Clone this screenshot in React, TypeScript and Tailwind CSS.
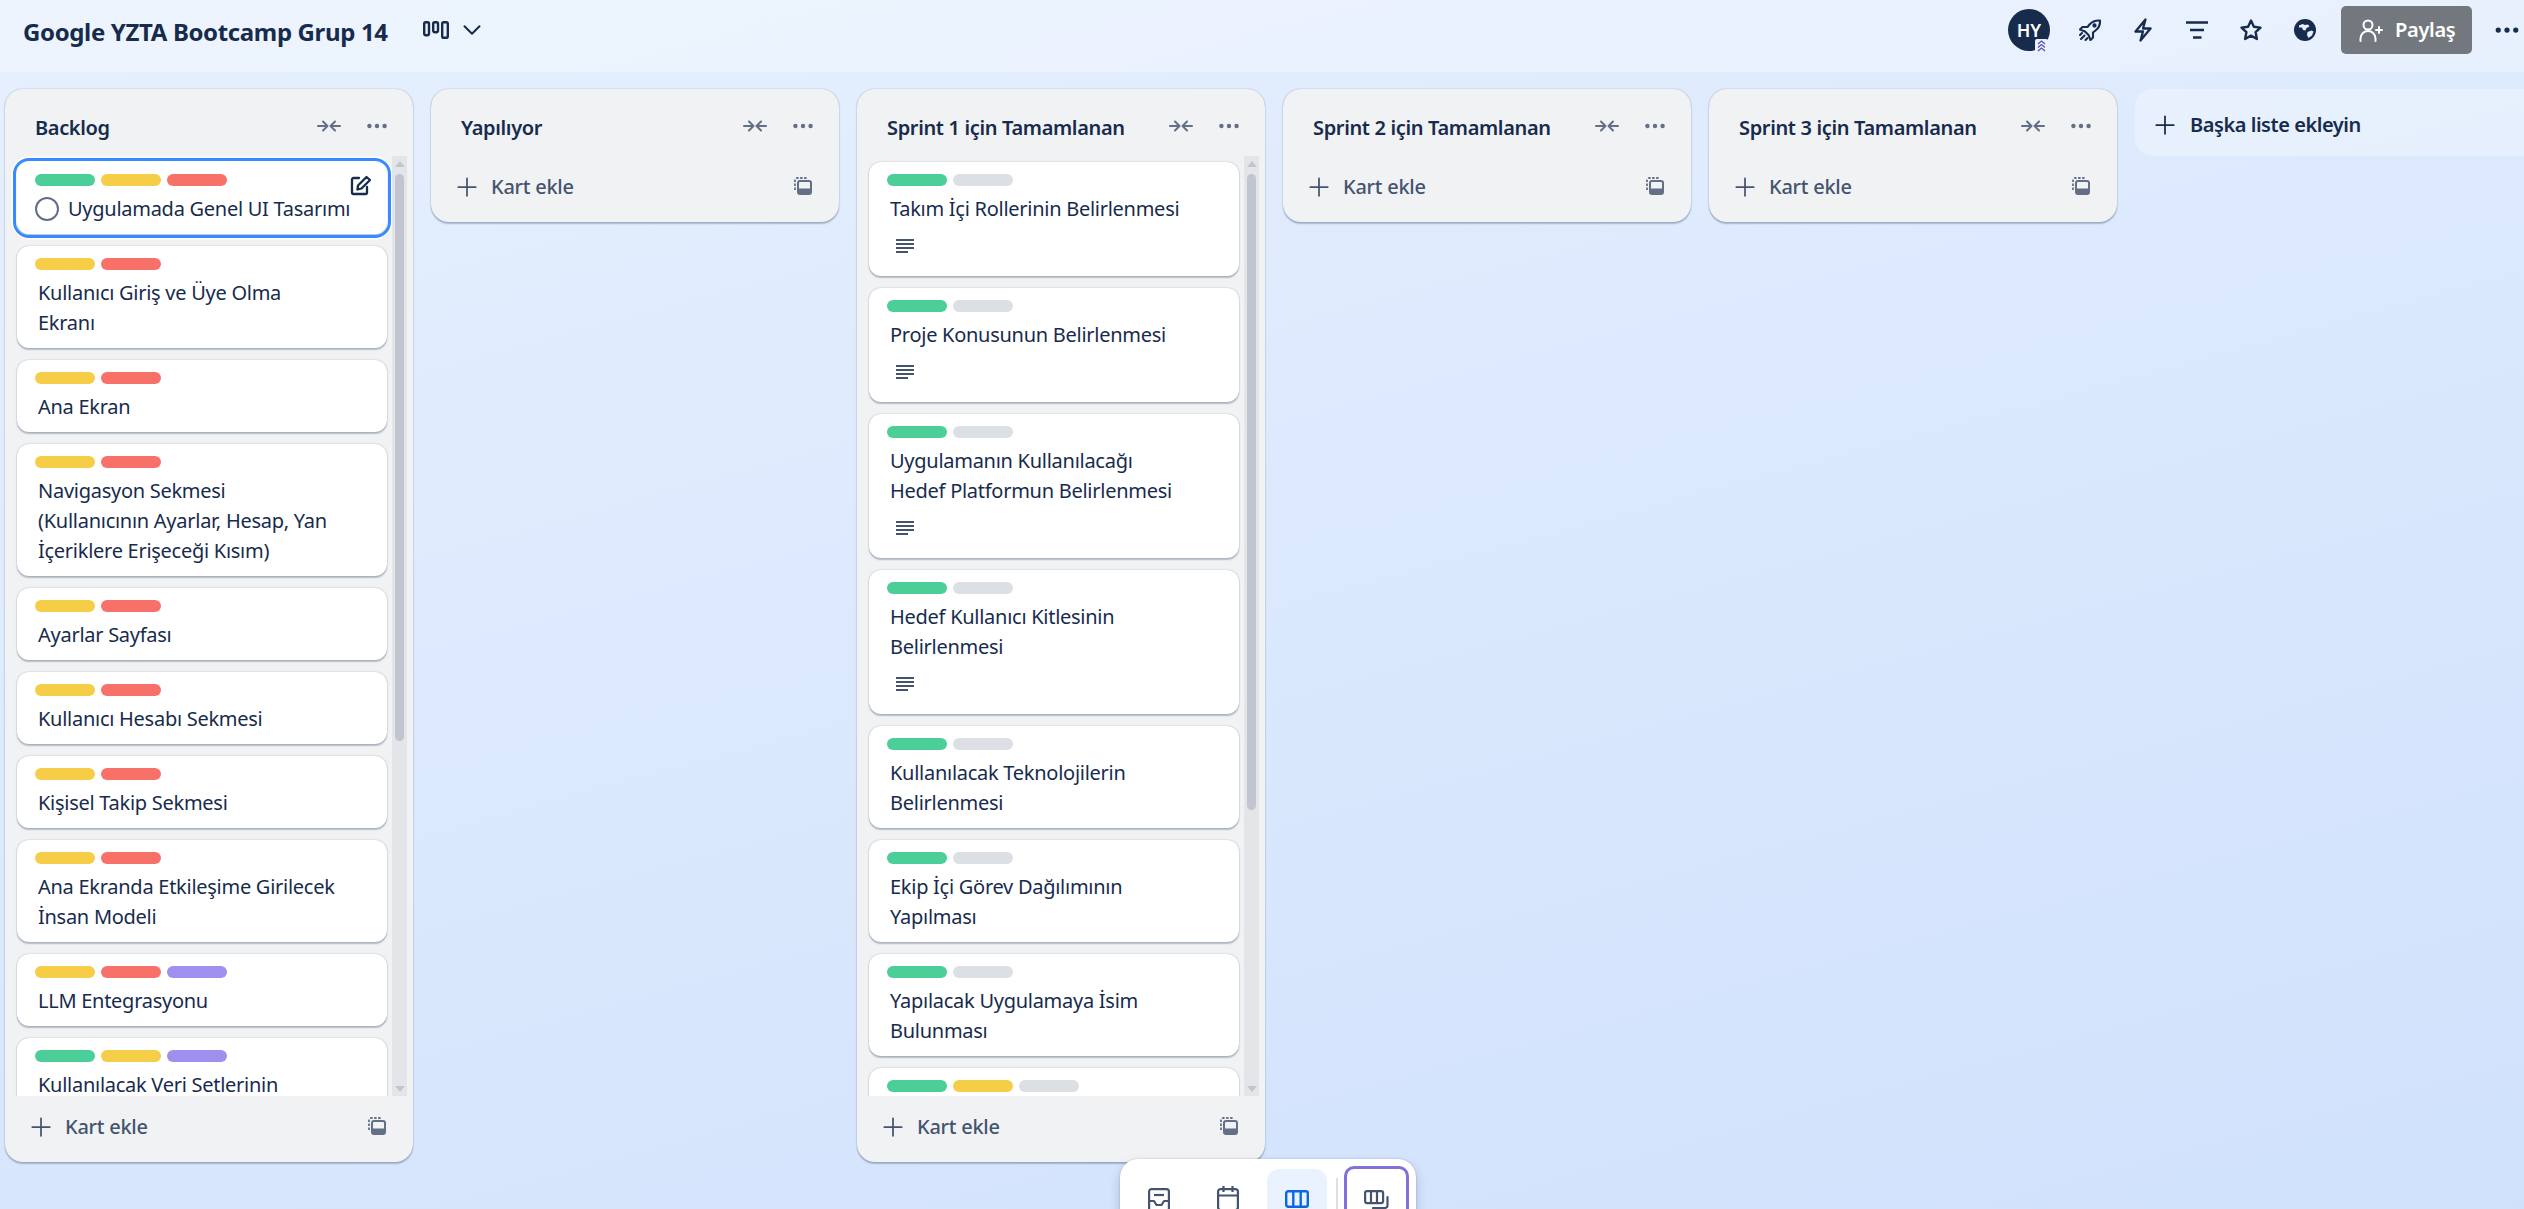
import React from "react";
import { Plus, ChevronDown, Ellipsis } from "lucide-react";

const G = "bg-[#4BCE97]", Y = "bg-[#F5CD47]", R = "bg-[#F87168]", P = "bg-[#9F8FEF]", S = "bg-[#DCDFE4]";

type CardT = { l: string[]; t: string[]; d?: boolean; focus?: boolean };

const backlog: CardT[] = [
  { l: [G, Y, R], t: ["Uygulamada Genel UI Tasarımı"], focus: true },
  { l: [Y, R], t: ["Kullanıcı Giriş ve Üye Olma", "Ekranı"] },
  { l: [Y, R], t: ["Ana Ekran"] },
  { l: [Y, R], t: ["Navigasyon Sekmesi", "(Kullanıcının Ayarlar, Hesap, Yan", "İçeriklere Erişeceği Kısım)"] },
  { l: [Y, R], t: ["Ayarlar Sayfası"] },
  { l: [Y, R], t: ["Kullanıcı Hesabı Sekmesi"] },
  { l: [Y, R], t: ["Kişisel Takip Sekmesi"] },
  { l: [Y, R], t: ["Ana Ekranda Etkileşime Girilecek", "İnsan Modeli"] },
  { l: [Y, R, P], t: ["LLM Entegrasyonu"] },
  { l: [G, Y, P], t: ["Kullanılacak Veri Setlerinin"] },
];

const sprint1: CardT[] = [
  { l: [G, S], t: ["Takım İçi Rollerinin Belirlenmesi"], d: true },
  { l: [G, S], t: ["Proje Konusunun Belirlenmesi"], d: true },
  { l: [G, S], t: ["Uygulamanın Kullanılacağı", "Hedef Platformun Belirlenmesi"], d: true },
  { l: [G, S], t: ["Hedef Kullanıcı Kitlesinin", "Belirlenmesi"], d: true },
  { l: [G, S], t: ["Kullanılacak Teknolojilerin", "Belirlenmesi"] },
  { l: [G, S], t: ["Ekip İçi Görev Dağılımının", "Yapılması"] },
  { l: [G, S], t: ["Yapılacak Uygulamaya İsim", "Bulunması"] },
  { l: [G, Y, S], t: [] },
];

function CollapseIcon() {
  return (
    <svg width="24" height="14" viewBox="0 0 24 14" fill="none" stroke="#626F86" strokeWidth="2" strokeLinecap="round" strokeLinejoin="round">
      <path d="M1 7h9M6 2.5 10.5 7 6 11.5M23 7h-9M18 2.5 13.5 7l4.5 4.5" />
    </svg>
  );
}

function TemplateIcon() {
  return (
    <svg className="-translate-y-[1px]" width="18" height="18" viewBox="0 0 18 18" fill="none">
      <path d="M1 13V3a2 2 0 0 1 2-2h11" stroke="#626F86" strokeWidth="1.8" strokeDasharray="2.4 1.6" />
      <rect x="4" y="4" width="13" height="13" rx="2" stroke="#626F86" strokeWidth="2" />
      <rect x="4" y="11.5" width="13" height="5.5" fill="#626F86" />
    </svg>
  );
}

function DescIcon() {
  return (
    <svg width="18" height="14" viewBox="0 0 18 14" fill="#44546F">
      <rect x="0" y="0" width="18" height="2" />
      <rect x="0" y="4" width="18" height="2" />
      <rect x="0" y="8" width="18" height="2" />
      <rect x="0" y="12" width="12" height="2" />
    </svg>
  );
}

function Scrollbar({ end }: { end: string }) {
  return (
    <div className="relative flex w-[15px] shrink-0 flex-col items-center bg-[#E4E5E9]">
      <div className="mt-[5px] h-0 w-0 border-x-[5px] border-b-[6px] border-x-transparent border-b-[#C1C5CF]" />
      <div className={`mt-[7px] w-[9px] rounded-[5px] bg-[#C1C5CF] ${end}`} />
      <div className="absolute bottom-[4px] h-0 w-0 border-x-[5px] border-t-[6px] border-x-transparent border-t-[#C1C5CF]" />
    </div>
  );
}

function Card({ c }: { c: CardT }) {
  return (
    <div
      className={`relative shrink-0 rounded-[12px] bg-white px-[18px] pt-[12px] pb-[10px] ${
        c.focus
          ? "outline-[3px] outline-[#388BFF] outline-offset-[1px] shadow-[0_1.5px_1.5px_rgba(9,30,66,0.25),0_0_0_5.5px_#ffffff]"
          : "shadow-[0_1.5px_1.5px_rgba(9,30,66,0.25),0_0_1.5px_rgba(9,30,66,0.31)]"
      }`}
    >
      <div className="flex gap-[6px]">
        {c.l.map((x, i) => (
          <div key={i} className={`h-[12px] w-[60px] rounded-[6px] ${x}`} />
        ))}
      </div>
      <div className={`mt-[8px] text-[20px] leading-[30px] tracking-[-0.27px] text-[#172B4D] ${c.focus ? "flex items-center" : "pl-[3px]"}`}>
        {c.focus && <span className="mr-[9px] h-[24px] w-[24px] shrink-0 rounded-full border-2 border-[#626F86]" />}
        <div>
          {c.t.map((x, i) => (
            <div key={i} className="whitespace-nowrap">{x}</div>
          ))}
        </div>
      </div>
      {c.d && (
        <div className="mt-[15px] mb-[13px] pl-[9px] leading-[0]">
          <DescIcon />
        </div>
      )}
      {c.focus && (
        <svg className="absolute right-[15px] top-[13px]" width="22" height="21" viewBox="0 0 22 21" fill="none" stroke="#172B4D" strokeWidth="2.3" strokeLinejoin="round" strokeLinecap="round">
          <path d="M9 3H3.5A1.5 1.5 0 0 0 2 4.5v13A1.5 1.5 0 0 0 3.5 19h12a1.5 1.5 0 0 0 1.5-1.5V12" />
          <path d="M16.5 2 20 5 11.5 13.5 7.5 14.5 8 10.5Z" />
        </svg>
      )}
    </div>
  );
}

function Column({ title, cards, thumb }: { title: string; cards?: CardT[]; thumb?: string }) {
  return (
    <div className="flex max-h-full w-[408px] shrink-0 flex-col rounded-[18px] bg-[#F1F2F4] shadow-[0_1.5px_1.5px_rgba(9,30,66,0.25),0_0_1.5px_rgba(9,30,66,0.31)]">
      <div className="flex h-[67px] shrink-0 items-center pl-[30px] pr-[23px] pt-[10px]">
        <div className="flex-1 text-[20px] font-semibold leading-[30px] tracking-[-0.35px] text-[#172B4D]">{title}</div>
        <div className="mr-[23px] flex -translate-y-[2px]"><CollapseIcon /></div>
        <Ellipsis className="-translate-y-[2px]" size={26} color="#626F86" strokeWidth={2.1} />
      </div>
      {cards && (
        <div className="flex min-h-0 pr-[6px]">
          <div className="flex min-h-0 min-w-0 flex-1 flex-col gap-[12px] overflow-hidden pl-[12px] pr-[5px] pt-[6px]">
            {cards.map((c, i) => (
              <Card key={i} c={c} />
            ))}
          </div>
          {thumb && <Scrollbar end={thumb} />}
        </div>
      )}
      <div className="flex h-[66px] shrink-0 items-center pb-[4px] pl-[21px] pr-[27px] text-[#44546F]">
        <Plus size={30} color="#44546F" strokeWidth={1.4} />
        <span className="ml-[9px] flex-1 text-[20px] font-medium leading-[30px] tracking-[-0.25px]">Kart ekle</span>
        <TemplateIcon />
      </div>
    </div>
  );
}

function BoardIcon() {
  return (
    <svg width="26" height="18" viewBox="0 0 26 18" fill="none" stroke="#172B4D" strokeWidth="2.4">
      <rect x="1.2" y="1.2" width="4.8" height="13" rx="1.6" />
      <rect x="10.2" y="1.2" width="4.8" height="10" rx="1.6" />
      <rect x="19.2" y="1.2" width="5.6" height="15.6" rx="1.6" />
    </svg>
  );
}

function RocketIcon() {
  return (
    <svg width="24" height="24" viewBox="0 0 24 24" fill="none" stroke="#172B4D" strokeWidth="2.1" strokeLinejoin="round" strokeLinecap="round">
      <path d="M22 2.5c-4.5-.3-8 1.2-10.5 4L9.5 9H4.5L2 11.5 7 13.5l3.5 3.5 2 5 2.5-2.5v-5l2.5-2C20.8 10 22.3 6.5 22 2.5Z" />
      <circle cx="16.5" cy="7.5" r="1.1" />
      <path d="M3 21l3.5-3.5M7.5 22l2-2M2 17l2-2" />
    </svg>
  );
}

function BoltIcon() {
  return (
    <svg width="18" height="24" viewBox="0 0 18 24" fill="none" stroke="#172B4D" strokeWidth="2.3" strokeLinejoin="round" strokeLinecap="round">
      <path d="M11.5 1.5 1.5 13.5H9L6.5 22.5 16.5 10.5H9Z" />
    </svg>
  );
}

function FilterIcon() {
  return (
    <svg width="22" height="18" viewBox="0 0 22 18" stroke="#172B4D" strokeWidth="2.4">
      <path d="M0 1.5h22M4 9h14M7 16.5h8.5" />
    </svg>
  );
}

function StarIcon() {
  return (
    <svg width="24" height="24" viewBox="0 0 24 24" fill="none" stroke="#172B4D" strokeWidth="2.4" strokeLinejoin="round">
      <path d="M12 2.5l2.9 6.3 6.6.8-4.900 4.600 1.300 6.800-5.900-3.400-5.900 3.400 1.300-6.800L2.500 9.600l6.600-.8Z" />
    </svg>
  );
}

function GlobeIcon() {
  return (
    <svg width="22" height="22" viewBox="0 0 22 22">
      <circle cx="11" cy="11" r="11" fill="#172B4D" />
      <path d="M5 6.500l3.500-1.500 2.500 1 3-.5 1.500 2-3 1.500-1 2.500-2.500-.5-1-2.500-3 0z" fill="#E6F0FE" />
      <path d="M13.500 13l4-1.500 2 1-1.500 4-3.500 2.500-1.500-3z" fill="#E6F0FE" />
    </svg>
  );
}

function ShareIcon() {
  return (
    <svg width="24" height="23" viewBox="0 0 24 23" fill="none" stroke="#ffffff" strokeWidth="2" strokeLinecap="round">
      <circle cx="9" cy="6" r="4.5" />
      <path d="M1.5 22v-2.500a7.500 7.500 0 0 1 15 0V22" />
      <path d="M20 8v6M17 11h6" />
    </svg>
  );
}

function InboxIcon() {
  return (
    <svg width="22" height="24" viewBox="0 0 22 24" fill="none" stroke="#44546F" strokeWidth="2.2" strokeLinejoin="round">
      <rect x="1.1" y="1.1" width="19.8" height="21.8" rx="2.5" />
      <path d="M6 7h10" />
      <path d="M1 13h5l2.500 4h5L16 13h5" />
    </svg>
  );
}

function CalendarIcon() {
  return (
    <svg width="22" height="26" viewBox="0 0 22 26" fill="none" stroke="#44546F" strokeWidth="2.2">
      <rect x="1.1" y="3.1" width="19.8" height="21" rx="2.5" />
      <path d="M6.500 0v6M15.500 0v6M1 9.500h20" />
    </svg>
  );
}

function ColumnsIcon() {
  return (
    <svg width="24" height="18" viewBox="0 0 24 18" fill="none" stroke="#0C66E4" strokeWidth="2.4">
      <rect x="1.2" y="1.2" width="21.6" height="15.6" rx="2" />
      <path d="M8.300 1v16M15.700 1v16" />
    </svg>
  );
}

function SwitchIcon() {
  return (
    <svg width="25" height="22" viewBox="0 0 25 22" fill="none" stroke="#44546F" strokeWidth="2.2" strokeLinecap="round">
      <rect x="1.1" y="1.1" width="18" height="12" rx="2" />
      <path d="M7 1v12M13 1v12" />
      <path d="M23.500 7v8.500a2.500 2.500 0 0 1-2.500 2.500H9" />
    </svg>
  );
}

export default function App() {
  return (
    <div
      className="relative flex h-[1209px] w-[2524px] flex-col overflow-hidden bg-[linear-gradient(165deg,#E6F0FE,#D0E1FC)]"
      style={{ fontFamily: '"Noto Sans", "Open Sans", sans-serif' }}
    >
      <header className="flex h-[72px] shrink-0 items-center bg-white/30 pb-[12px] pl-[23px] pr-[2px] text-[#172B4D]">
        <h1 className="mt-[4px] text-[24px] font-bold leading-[32px] tracking-[-0.36px]">Google YZTA Bootcamp Grup 14</h1>
        <div className="ml-[35px] flex"><BoardIcon /></div>
        <ChevronDown className="ml-[8px]" size={30} strokeWidth={1.6} />
        <div className="ml-auto flex items-center">
          <div className="relative flex h-[42px] w-[42px] items-center justify-center rounded-full bg-[#172B4D] text-[18px] font-semibold text-white">
            HY
            <svg className="absolute bottom-[-1px] right-[2px]" width="13" height="13" viewBox="0 0 13 13" fill="none" stroke="#5E4DB2" strokeWidth="1.3">
              <rect x="0" y="0" width="13" height="13" rx="2" fill="#E9F2FE" stroke="none" />
              <path d="M3 5l3.500-3L10 5M3 8.500l3.500-3 3.500 3M3 12l3.500-3 3.500 3" />
            </svg>
          </div>
          <div className="ml-[28px] flex"><RocketIcon /></div>
          <div className="ml-[32px] flex"><BoltIcon /></div>
          <div className="ml-[34px] flex"><FilterIcon /></div>
          <div className="ml-[31px] flex"><StarIcon /></div>
          <div className="ml-[31px] flex"><GlobeIcon /></div>
          <button className="ml-[25px] flex h-[48px] w-[131px] items-center rounded-[5px] bg-[#73777E] pl-[18px] text-[20px] font-semibold tracking-[-0.3px] text-white">
            <ShareIcon />
            <span className="ml-[12px]">Paylaş</span>
          </button>
          <Ellipsis className="ml-[20px]" size={30} strokeWidth={2.2} />
        </div>
      </header>

      <main className="flex min-h-0 flex-1 items-start gap-[18px] pb-[47px] pl-[5px] pt-[17px]">
        <Column title="Backlog" cards={backlog} thumb="h-[567px]" />
        <Column title="Yapılıyor" />
        <Column title="Sprint 1 için Tamamlanan" cards={sprint1} thumb="h-[636px]" />
        <Column title="Sprint 2 için Tamamlanan" />
        <Column title="Sprint 3 için Tamamlanan" />
        <div className="flex h-[67px] w-[408px] shrink-0 items-center rounded-[18px] bg-white/30 pl-[15px] pt-[5px] text-[20px] font-semibold tracking-[-0.45px] text-[#172B4D]">
          <Plus size={30} strokeWidth={1.4} />
          <span className="ml-[10px]">Başka liste ekleyin</span>
        </div>
      </main>

      <div className="absolute bottom-[-21px] left-[1120px] flex h-[71px] w-[296px] items-start gap-[9px] rounded-[18px] bg-white pl-[9px] pt-[10px] shadow-[0_6px_12px_rgba(9,30,66,0.2),0_0_1.5px_rgba(9,30,66,0.31)]">
        <div className="flex h-[60px] w-[60px] justify-center pt-[19px]"><InboxIcon /></div>
        <div className="flex h-[60px] w-[60px] justify-center pt-[17px]"><CalendarIcon /></div>
        <div className="flex h-[60px] w-[60px] justify-center rounded-[12px] bg-[#E9F2FE] pt-[21px]"><ColumnsIcon /></div>
        <div className="mt-[9px] h-[50px] w-[1.5px] bg-[#DCDFE4]" />
        <div className="-mt-[3px] -ml-[3px] flex h-[64px] w-[65px] justify-center rounded-[10px] border-[3px] border-[#8270DB] pt-[21px]"><SwitchIcon /></div>
      </div>
    </div>
  );
}
